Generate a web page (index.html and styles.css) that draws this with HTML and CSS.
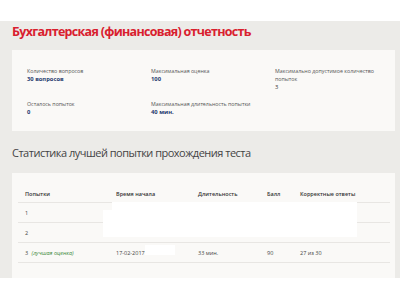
FILE: index.html
```html
<!DOCTYPE html>
<html lang="ru">
<head>
<meta charset="utf-8">
<link rel="stylesheet" href="styles.css">
</head>
<body>
<div class="page">
  <h1 class="title">Бухгалтерская (финансовая) отчетность</h1>
  <div class="card info">
    <div class="item"><div class="label">Количество вопросов</div><div class="value">30 вопросов</div></div>
    <div class="item"><div class="label">Максимальная оценка</div><div class="value">100</div></div>
    <div class="item"><div class="label">Максимально допустимое количество попыток</div><div class="value plain">3</div></div>
    <div class="item"><div class="label">Осталось попыток</div><div class="value">0</div></div>
    <div class="item"><div class="label">Максимальная длительность попытки</div><div class="value">40 мин.</div></div>
  </div>
  <h2 class="subtitle">Статистика лучшей попытки прохождения теста</h2>
  <div class="card stats">
    <div class="row head">
      <div class="c1">Попытки</div><div class="c2">Время начала</div><div class="c3">Длительность</div><div class="c4">Балл</div><div class="c5">Корректные ответы</div>
    </div>
    <div class="row"><div class="c1">1</div></div>
    <div class="row"><div class="c1">2</div></div>
    <div class="row"><div class="c1">3 <span class="best">(лучшая оценка)</span></div><div class="c2">17-02-2017</div><div class="c3">33 мин.</div><div class="c4">90</div><div class="c5">27 из 30</div></div>
    <div class="mask m1"></div>
    <div class="mask m2"></div>
    <div class="mask m3"></div>
  </div>
</div>
</body>
</html>
```
FILE: styles.css
```css
html, body { margin: 0; padding: 0; background: #fff; }
body { font-family: "Open Sans", "Liberation Sans", sans-serif; color: #444; }
.page {
  margin-top: 21px;
  height: 257px;
  background: #ecebe8;
  padding: 0 5px 0 12px;
  box-sizing: border-box;
  overflow: hidden;
}
.title {
  margin: 0;
  padding-top: 2px;
  height: 27px;
  font-size: 12.5px;
  font-weight: 700;
  color: #d9202e;
  letter-spacing: -0.7px;
  line-height: 18px;
}
.card { background: #faf9f7; }
.info {
  height: 81px;
  box-sizing: border-box;
  padding: 17px 0 0 15px;
  display: grid;
  grid-template-columns: 124px 124px 120px;
  grid-template-rows: 33px auto;
  font-size: 5.3px;
  line-height: 8px;
}
.label { color: #555; }
.value { color: #1f3a6e; font-weight: 700; font-size: 5.8px; }
.value.plain { font-weight: 400; color: #333; }
.subtitle {
  margin: 0;
  height: 42px;
  line-height: 44px;
  font-size: 11px;
  font-weight: 400;
  color: #444;
  letter-spacing: -0.5px;
}
.stats {
  position: relative;
  height: 105px;
  box-sizing: border-box;
  padding: 12px 5px 0 6px;
  font-size: 5.5px;
  color: #444;
}
.row {
  display: flex;
  height: 19px;
  align-items: center;
  border-bottom: 1px solid #e8e6e3;
}
.row.head { height: 17px; font-weight: 600; color: #333; }
.c1 { width: 98px; padding-left: 7px; box-sizing: border-box; }
.c2 { width: 82px; }
.c3 { width: 69px; }
.c4 { width: 33px; }
.c5 { flex: 1; }
.best { color: #3a8a3a; font-style: italic; margin-left: 2px; }
.mask { position: absolute; background: #fff; }
.m1 { left: 100px; top: 29px; width: 245px; height: 8px; }
.m2 { left: 91px; top: 37px; width: 254px; height: 27px; }
.m3 { left: 133px; top: 72px; width: 30px; height: 10px; }
```
